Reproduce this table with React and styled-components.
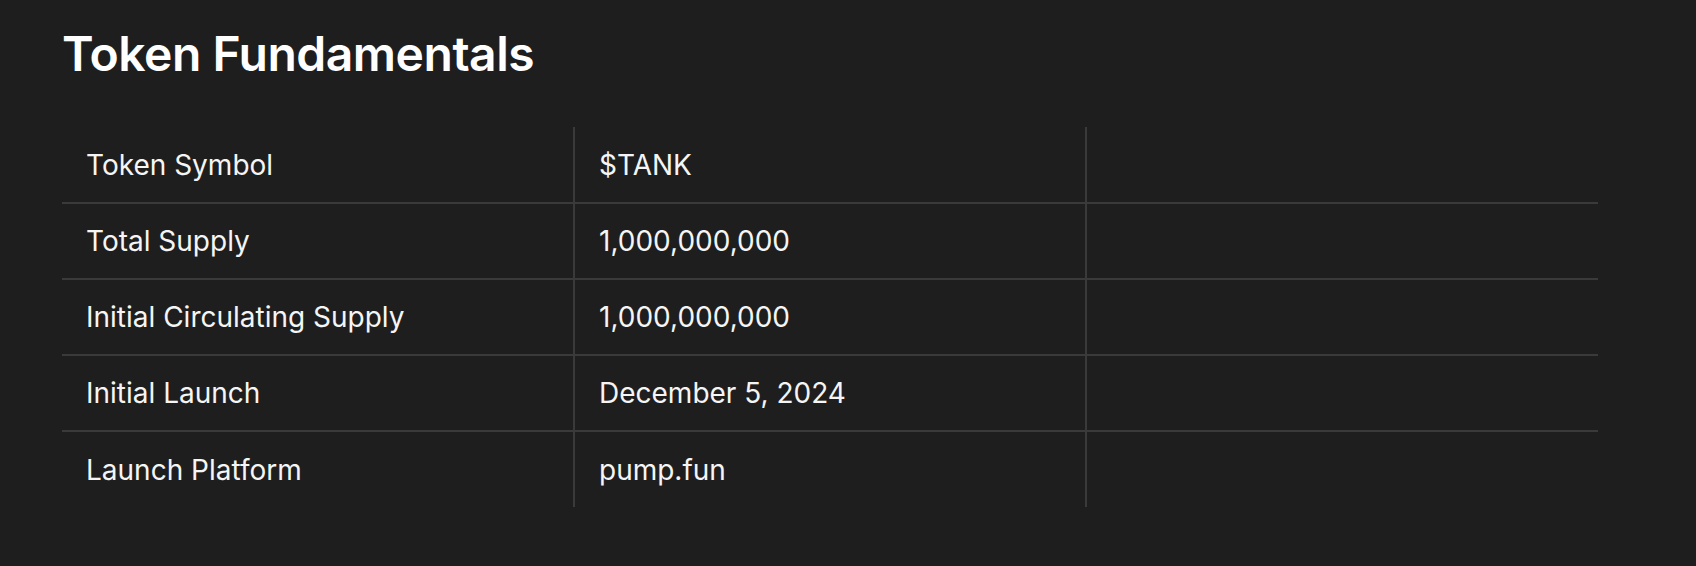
import React from "react";
import styled, { createGlobalStyle } from "styled-components";

const GlobalStyle = createGlobalStyle`
	html, body {
		margin: 0;
		padding: 0;
		background-color: #1e1e1e;
	}

	body {
		font-family: "Inter", "Liberation Sans", sans-serif;
		color: #f7f7f7;
	}
`;

const rows = [
	{ label: "Token Symbol", value: "$TANK" },
	{ label: "Total Supply", value: "1,000,000,000" },
	{ label: "Initial Circulating Supply", value: "1,000,000,000" },
	{ label: "Initial Launch", value: "December 5, 2024" },
	{ label: "Launch Platform", value: "pump.fun" },
];

// ===================== Styled Components
const Page = styled.div`
	width: 1696px;
	height: 566px;
	box-sizing: border-box;
	padding: 22px 0 0 62px;
	background-color: #1e1e1e;
`;

const Title = styled.h2`
	margin: 0;
	font-family: "Inter", "Liberation Sans", sans-serif;
	font-size: 48px;
	font-weight: 600;
	line-height: 64px;
	letter-spacing: -0.01em;
	color: #ffffff;
`;

const Table = styled.table`
	width: 1536px;
	margin-top: 41px;
	border-collapse: collapse;
	table-layout: fixed;
`;

const Row = styled.tr`
	height: 76px;
	border-bottom: ${({ $last }) => ($last ? "none" : "2px solid #3a3a3a")};
`;

const Cell = styled.td`
	padding: 0 24px;
	font-size: 28px;
	font-weight: 400;
	color: #f5f5f5;
	vertical-align: middle;
	border-right: ${({ $last }) => ($last ? "none" : "2px solid #3a3a3a")};
`;

const App = () => {
	return (
		<Page>
			<GlobalStyle />
			<Title>Token Fundamentals</Title>
			<Table>
				<tbody>
					{rows.map((row, id) => (
						<Row key={id} $last={id === rows.length - 1}>
							<Cell>{row.label}</Cell>
							<Cell>{row.value}</Cell>
							<Cell $last />
						</Row>
					))}
				</tbody>
			</Table>
		</Page>
	);
};

export default App;
